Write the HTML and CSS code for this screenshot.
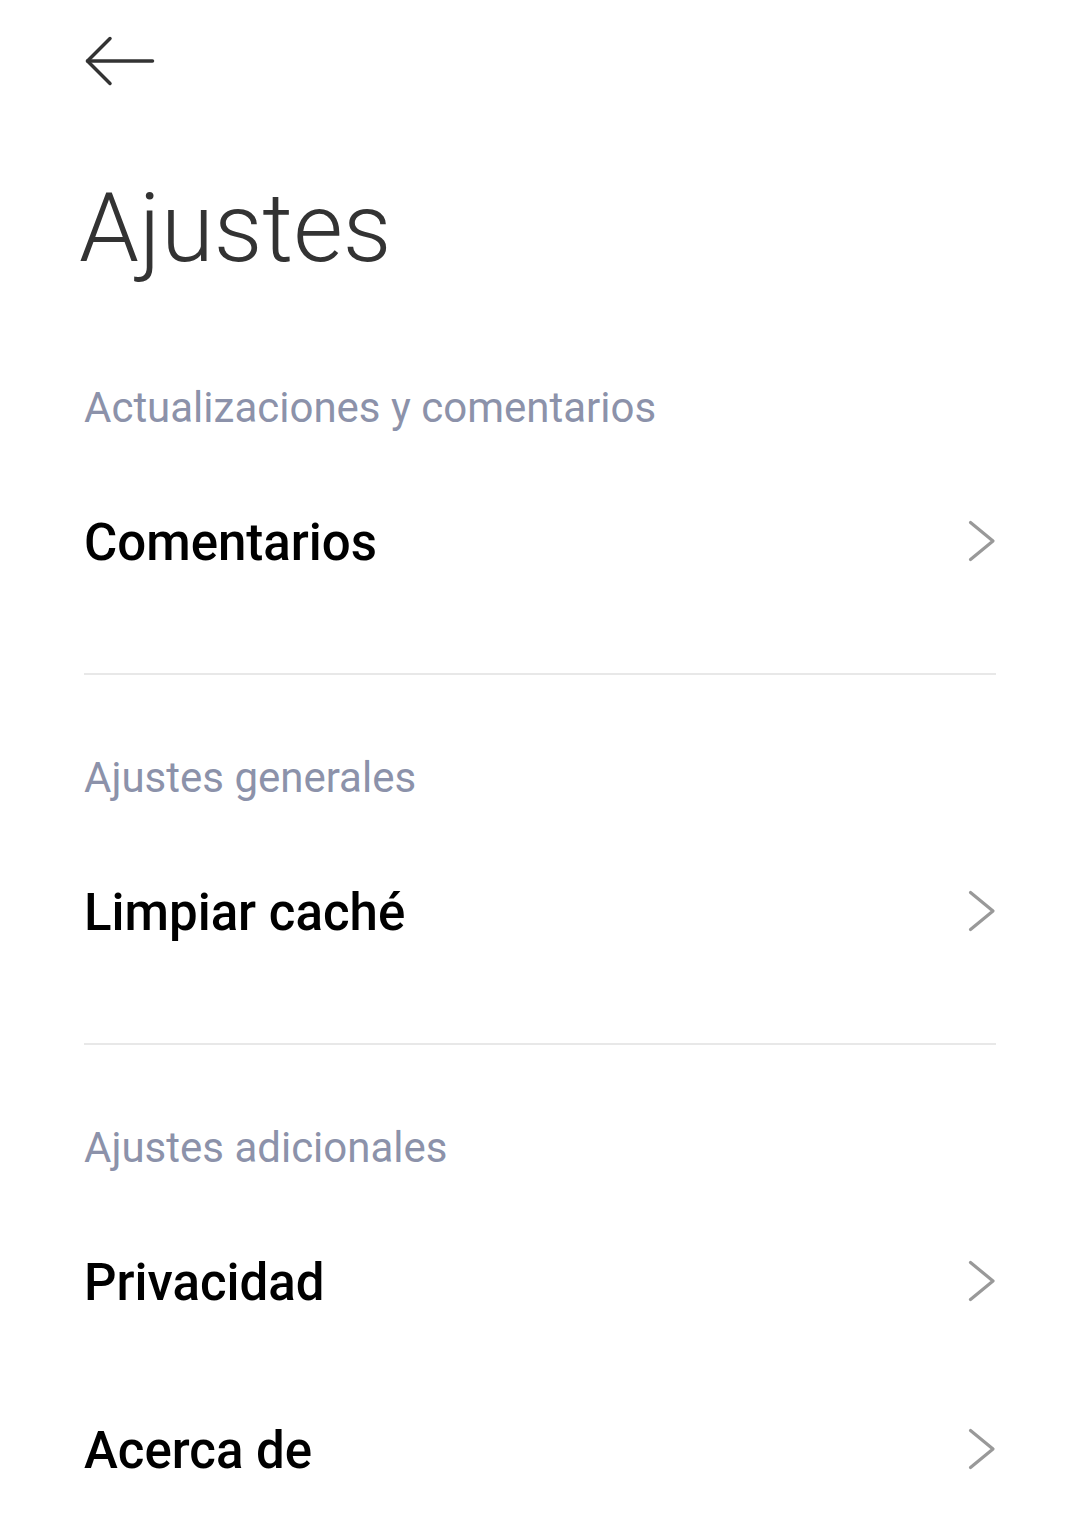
FILE: index.html
```html
<!DOCTYPE html>
<html lang="es">
<head>
    <meta charset="UTF-8">
    <meta name="viewport" content="width=device-width, initial-scale=1.0">
    <title>Ajustes</title>
    <link rel="stylesheet" href="styles.css">
</head>
<body>
    <!-- Barra superior -->
    <header class="topbar">
        <button class="back-btn" aria-label="Atrás">
            <svg width="70" height="50" viewBox="0 0 70 50">
                <polyline points="25,2.5 2.5,25 25,47.5" fill="none" stroke="#333" stroke-width="3.5" stroke-linecap="round" stroke-linejoin="round"/>
                <line x1="2.5" y1="25" x2="67.5" y2="25" stroke="#333" stroke-width="3.5" stroke-linecap="round"/>
            </svg>
        </button>
    </header>

    <main class="page">
        <h1 class="page-title">Ajustes</h1>

        <!-- Actualizaciones -->
        <section class="group">
            <h2 class="group-title">Actualizaciones y comentarios</h2>
            <a class="item" href="#">
                <span class="item-label">Comentarios</span>
                <svg class="chevron" width="30" height="44" viewBox="0 0 30 44"><polyline points="4.5,3.5 27,22 4.5,40.5"/></svg>
            </a>
            <hr class="divider">
        </section>

        <!-- Generales -->
        <section class="group">
            <h2 class="group-title">Ajustes generales</h2>
            <a class="item" href="#">
                <span class="item-label">Limpiar caché</span>
                <svg class="chevron" width="30" height="44" viewBox="0 0 30 44"><polyline points="4.5,3.5 27,22 4.5,40.5"/></svg>
            </a>
            <hr class="divider">
        </section>

        <!-- Adicionales -->
        <section class="group">
            <h2 class="group-title">Ajustes adicionales</h2>
            <a class="item" href="#">
                <span class="item-label">Privacidad</span>
                <svg class="chevron" width="30" height="44" viewBox="0 0 30 44"><polyline points="4.5,3.5 27,22 4.5,40.5"/></svg>
            </a>
            <a class="item" href="#">
                <span class="item-label">Acerca de</span>
                <svg class="chevron" width="30" height="44" viewBox="0 0 30 44"><polyline points="4.5,3.5 27,22 4.5,40.5"/></svg>
            </a>
        </section>
    </main>
</body>
</html>
```

FILE: styles.css
```css
body {
    margin: 0;
    padding: 0;
    background: #fff;
    font-family: Roboto, "Noto Sans", Arial, sans-serif;
    color: #000;
}

.topbar {
    height: 122px;
    display: flex;
    align-items: center;
    padding-left: 85px;
}

.back-btn {
    background: none;
    border: 0;
    padding: 0;
    margin: 0;
    display: flex;
    cursor: pointer;
}

.page {
    padding: 0 84px;
}

.page-title {
    margin: 47px 0 91px -5px;
    font-size: 96px;
    font-weight: 300;
    line-height: 118px;
    color: #333;
}

.group-title {
    margin: 0 0 19px;
    font-size: 42px;
    font-weight: 400;
    line-height: 60px;
    color: #8c92aa;
}

.item {
    height: 168px;
    display: flex;
    align-items: center;
    justify-content: space-between;
    text-decoration: none;
    color: #000;
}

.item-label {
    padding-top: 3px;
    font-size: 51px;
    font-weight: 500;
    line-height: 60px;
}

.chevron polyline {
    fill: none;
    stroke: #999;
    stroke-width: 3.2;
    stroke-linecap: round;
    stroke-linejoin: round;
}

/* разделитель */
.divider {
    margin: 48px 0 73px;
    border: 0;
    height: 2px;
    background: #e8e8e8;
}
```
